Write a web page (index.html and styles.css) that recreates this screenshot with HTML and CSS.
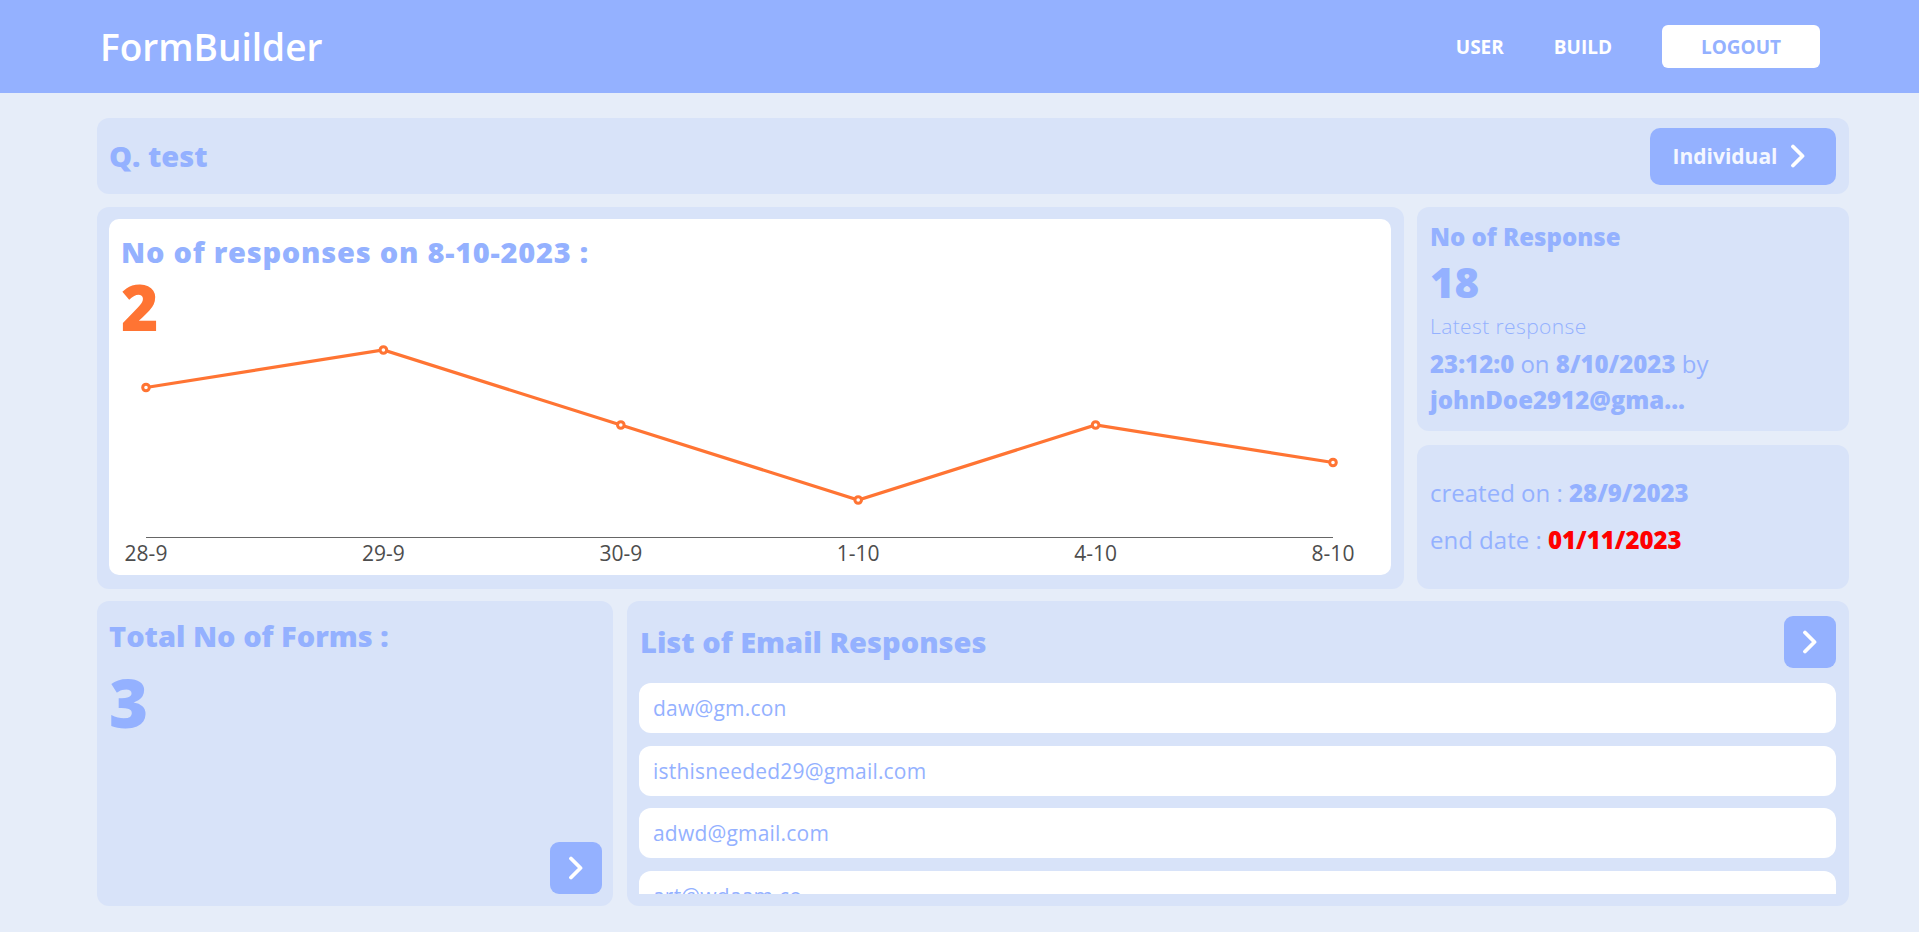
FILE: index.html
```html
<!DOCTYPE html>
<html lang="en">
<head>
<meta charset="utf-8">
<title>FormBuilder</title>
<link rel="stylesheet" href="styles.css">
</head>
<body>
<header class="topbar">
  <div class="brand">FormBuilder</div>
  <nav class="nav">
    <a class="nav-link" href="#">USER</a>
    <a class="nav-link" href="#">BUILD</a>
    <button class="logout">LOGOUT</button>
  </nav>
</header>
<main class="page">
  <section class="card qbar">
    <h1 class="qtitle">Q. test</h1>
    <button class="btn-individual">Individual
      <svg class="chev" viewBox="0 0 16 24" width="16" height="24"><path d="M3 2.5 L12.5 12 L3 21.5" fill="none" stroke="#fff" stroke-width="3.8" stroke-linecap="round" stroke-linejoin="round"/></svg>
    </button>
  </section>

  <div class="row row-top">
    <section class="card chart-card">
      <div class="chart-panel">
        <div class="chart-head">
          <h2 class="heading wide">No of responses on 8-10-2023 :</h2>
          <div class="chart-count">2</div>
        </div>
        <svg class="chart" viewBox="0 0 1282 232" width="1282" height="232">
          <line x1="37" y1="195.5" x2="1224" y2="195.5" stroke="#666" stroke-width="1.2"/>
          <polyline points="37,45.5 274.4,8 511.8,83 749.2,158 986.6,83 1224,120.5" fill="none" stroke="#FF7433" stroke-width="3.2"/>
          <g fill="#fff" stroke="#FF7433" stroke-width="3">
            <circle cx="37" cy="45.5" r="3.3"/>
            <circle cx="274.4" cy="8" r="3.3"/>
            <circle cx="511.8" cy="83" r="3.3"/>
            <circle cx="749.2" cy="158" r="3.3"/>
            <circle cx="986.6" cy="83" r="3.3"/>
            <circle cx="1224" cy="120.5" r="3.3"/>
          </g>
          <g class="tick">
            <text x="37" y="219" text-anchor="middle">28-9</text>
            <text x="274.4" y="219" text-anchor="middle">29-9</text>
            <text x="511.8" y="219" text-anchor="middle">30-9</text>
            <text x="749.2" y="219" text-anchor="middle">1-10</text>
            <text x="986.6" y="219" text-anchor="middle">4-10</text>
            <text x="1224" y="219" text-anchor="middle">8-10</text>
          </g>
        </svg>
      </div>
    </section>

    <div class="side">
      <section class="card stats">
        <div class="stats-title">No of Response</div>
        <div class="stats-count">18</div>
        <div class="stats-label">Latest response</div>
        <div class="stats-line"><b>23:12:0</b> on <b>8/10/2023</b> by</div>
        <div class="stats-line"><b>johnDoe2912@gma...</b></div>
      </section>
      <section class="card dates">
        <div class="date-line">created on : <b>28/9/2023</b></div>
        <div class="date-line">end date : <b class="end">01/11/2023</b></div>
      </section>
    </div>
  </div>

  <div class="row row-bottom">
    <section class="card forms">
      <h2 class="heading">Total No of Forms :</h2>
      <div class="forms-count">3</div>
      <button class="btn-arrow btn-forms">
        <svg class="chev" viewBox="0 0 16 24" width="16" height="24"><path d="M3 2.5 L12.5 12 L3 21.5" fill="none" stroke="#fff" stroke-width="3.8" stroke-linecap="round" stroke-linejoin="round"/></svg>
      </button>
    </section>

    <section class="card emails">
      <div class="emails-head">
        <h2 class="heading">List of Email Responses</h2>
        <button class="btn-arrow">
          <svg class="chev" viewBox="0 0 16 24" width="16" height="24"><path d="M3 2.5 L12.5 12 L3 21.5" fill="none" stroke="#fff" stroke-width="3.8" stroke-linecap="round" stroke-linejoin="round"/></svg>
        </button>
      </div>
      <div class="email-list">
        <div class="email-row">daw@gm.con</div>
        <div class="email-row">isthisneeded29@gmail.com</div>
        <div class="email-row">adwd@gmail.com</div>
        <div class="email-row">art@wdaam.co</div>
      </div>
    </section>
  </div>
</main>
</body>
</html>
```
FILE: styles.css
```css
* { box-sizing: border-box; }

body {
  margin: 0;
  background: #E6EDF9;
  font-family: "Open Sans", "Liberation Sans", sans-serif;
  color: #94B1FF;
}

h1, h2 { margin: 0; }

.topbar {
  height: 93px;
  background: #94B1FF;
  display: flex;
  align-items: center;
  justify-content: space-between;
  padding: 0 99px 0 100px;
}

.brand {
  color: #fff;
  font-size: 37px;
  font-weight: 600;
  line-height: 1;
}

.nav { display: flex; align-items: center; }

.nav-link {
  color: #fff;
  font-size: 19px;
  font-weight: 700;
  text-decoration: none;
  margin-right: 50px;
}

.logout {
  width: 158px;
  height: 43px;
  background: #fff;
  border: 0;
  border-radius: 6px;
  color: #94B1FF;
  font-family: "Open Sans", "Liberation Sans", sans-serif;
  font-size: 19px;
  font-weight: 700;
}

.page {
  padding: 25px 70px 26px 97px;
  display: flex;
  flex-direction: column;
  gap: 12.5px;
}

.card {
  background: #D8E3F9;
  border-radius: 12px;
}

.qbar {
  height: 76px;
  display: flex;
  align-items: center;
  justify-content: space-between;
  padding: 0 13px 0 12px;
}

.qtitle, .heading {
  font-size: 29px;
  font-weight: 800;
  line-height: 40px;
  color: #94B1FF;
}

.heading.wide { letter-spacing: 0.75px; }

.btn-individual {
  width: 186px;
  height: 57px;
  background: #94B1FF;
  border: 0;
  border-radius: 10px;
  display: flex;
  align-items: center;
  justify-content: center;
  gap: 12px;
  padding: 0 8px 0 0;
  color: #F4F7FF;
  font-family: "Open Sans", "Liberation Sans", sans-serif;
  font-size: 21px;
  font-weight: 700;
}

.chev { display: block; }

.row { display: grid; }
.row-top { height: 382px; grid-template-columns: 1307fr 432fr; gap: 13px; }
.row-bottom { height: 305px; grid-template-columns: 516fr 1222fr; gap: 14px; }

.chart-card { padding: 12px 13px 14px 12px; }

.chart-panel {
  background: #fff;
  border-radius: 10px;
  height: 100%;
  overflow: hidden;
}

.chart-head { padding: 13px 12px 0; }

.chart-count {
  font-size: 64px;
  font-weight: 800;
  line-height: 70px;
  color: #FF7433;
}

.chart { display: block; width: 100%; height: 232px; }

.tick text {
  font-family: "Open Sans", "Liberation Sans", sans-serif;
  font-size: 21px;
  fill: #4d4d4d;
}

.side {
  display: flex;
  flex-direction: column;
  gap: 14px;
}

.stats { padding: 13px 13px 13px; }

.stats-title { font-size: 24px; font-weight: 800; line-height: 34px; }
.stats-count { font-size: 42px; font-weight: 800; line-height: 55px; }
.stats-label { font-size: 21px; font-weight: 300; line-height: 34.5px; letter-spacing: 0.4px; margin-bottom: 3px; }
.stats-line { font-size: 24px; font-weight: 400; line-height: 36px; white-space: nowrap; }
.stats-line b { font-weight: 800; }

.dates {
  flex: 1;
  display: flex;
  flex-direction: column;
  justify-content: center;
  gap: 11px;
  padding: 0 13px;
}

.date-line { font-size: 24px; font-weight: 400; line-height: 36px; }
.date-line b { font-weight: 800; }
.date-line .end { color: #FF0000; }

.forms {
  display: flex;
  flex-direction: column;
  padding: 15px 11px 12px 12px;
}

.forms-count { font-size: 67px; font-weight: 800; line-height: 92px; }

.btn-arrow {
  width: 52px;
  height: 52px;
  background: #94B1FF;
  border: 0;
  border-radius: 9px;
  display: flex;
  align-items: center;
  justify-content: center;
  padding: 0;
}

.btn-forms { margin-top: auto; align-self: flex-end; }

.emails {
  display: flex;
  flex-direction: column;
  padding: 15px 13px 12px 12px;
  min-width: 0;
}

.emails-head {
  height: 52px;
  display: flex;
  align-items: center;
  justify-content: space-between;
  margin-bottom: 15px;
  padding-left: 1px;
}

.email-list {
  height: 211px;
  overflow: hidden;
  display: flex;
  flex-direction: column;
  gap: 12.5px;
}

.email-row {
  flex-shrink: 0;
  height: 50px;
  background: #fff;
  border-radius: 12px;
  display: flex;
  align-items: center;
  padding-left: 14px;
  font-size: 21px;
  font-weight: 400;
  letter-spacing: 0.2px;
}
```
